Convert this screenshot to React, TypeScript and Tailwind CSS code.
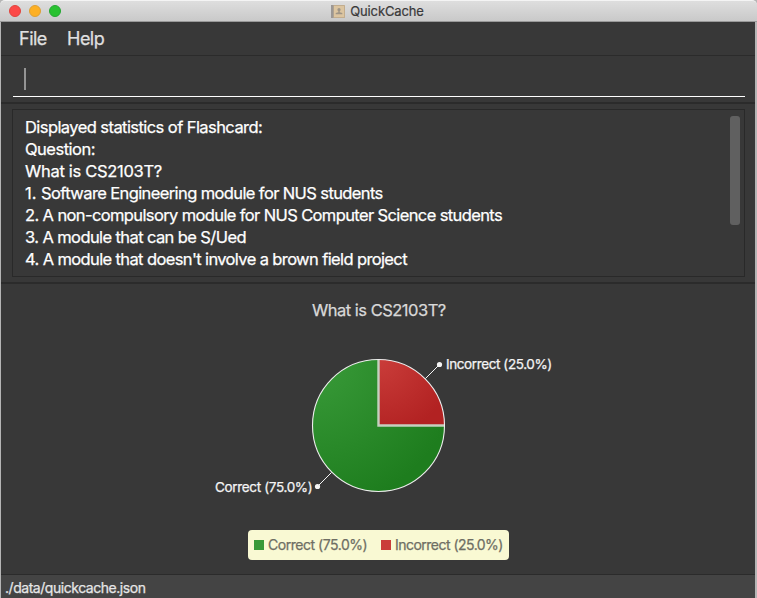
const lines = [
  { text: 'Displayed statistics of Flashcard:', track: 'tracking-[-0.57px]' },
  { text: 'Question:', track: 'tracking-[-0.5px]' },
  { text: 'What is CS2103T?', track: 'tracking-[-0.3px]' },
  { text: '1. Software Engineering module for NUS students', track: 'tracking-[-0.61px]', lead: true },
  { text: '2. A non-compulsory module for NUS Computer Science students', track: 'tracking-[-0.62px]' },
  { text: '3. A module that can be S/Ued', track: 'tracking-[-0.6px]' },
  { text: "4. A module that doesn't involve a brown field project", track: 'tracking-[-0.62px]' },
];

function TitleBar() {
  return (
    <header className="relative flex h-[22px] shrink-0 items-center justify-center rounded-t-[5px] border-t border-b border-t-[#f4f4f4] border-b-[#999999] bg-linear-to-b from-[#dedede] to-[#c9c9c9]">
      <div className="absolute top-1 left-[9px] flex gap-2">
        <span className="size-3 rounded-full border border-[#e0443e] bg-[#fc4948]" />
        <span className="size-3 rounded-full border border-[#dea034] bg-[#fdb024]" />
        <span className="size-3 rounded-full border border-[#24a732] bg-[#29c231]" />
      </div>
      <svg className="mr-[5px] ml-[-2px] h-[13px] w-[14px]" viewBox="0 0 14 13">
        <rect x="0" y="0" width="14" height="13" rx="0.500" fill="#c2ad8e" />
        <rect x="0" y="0" width="2.500" height="13" fill="#9b9794" />
        <rect x="3" y="1" width="10" height="11" fill="#dcc5a0" />
        <circle cx="8" cy="4.700" r="1.600" fill="#9f9586" />
        <path d="M7.3 6h1.4v1.2l2.6.9v1.2H4.7V8.100l2.600-.9z" fill="#9f9586" />
      </svg>
      <h1 className="text-[13px] leading-5 tracking-[-0.12px] text-[#3a3a3a] [-webkit-text-stroke:0.2px]">QuickCache</h1>
    </header>
  );
}

function Chart() {
  return (
    <svg className="block h-[290px] w-[754px] [&_text]:[stroke-width:0.25px]" viewBox="1 284 754 290">
      <defs>
        <radialGradient id="green" gradientUnits="userSpaceOnUse" cx="312" cy="359" r="150">
          <stop offset="0" stopColor="#399a39" />
          <stop offset="0.25" stopColor="#339433" />
          <stop offset="1" stopColor="#1e7d1e" />
        </radialGradient>
        <radialGradient id="red" gradientUnits="userSpaceOnUse" cx="379" cy="359" r="76">
          <stop offset="0" stopColor="#ca3d3a" />
          <stop offset="1" stopColor="#b22222" />
        </radialGradient>
      </defs>
      <text x="312" y="316" fontSize="16.500" letterSpacing="-0.5" fill="#d9d9d9" stroke="#d9d9d9">What is CS2103T?</text>
      <path d="M378.500 425.500H444.500A66 66 0 1 1 378.500 359.500Z" fill="url(#green)" />
      <path d="M378.500 425.500V359.500A66 66 0 0 1 444.500 425.500Z" fill="url(#red)" />
      <path d="M378.500 359.500V425.500H444.500" fill="none" stroke="#c5d0c0" strokeWidth="2.400" />
      <circle cx="378.500" cy="425.500" r="66" fill="none" stroke="#eeeeee" strokeWidth="1.100" />
      <path d="M425.500 378.500L439.500 364.500M331.500 472.500L317.500 486.500" stroke="#f4f4f4" />
      <circle cx="439.500" cy="364.500" r="2.600" fill="#f4f4f4" />
      <circle cx="317.500" cy="486.500" r="2.600" fill="#f4f4f4" />
      <text x="446" y="369" fontSize="13.500" letterSpacing="-0.4" fill="#f4f4f4" stroke="#f4f4f4">Incorrect (25.0%)</text>
      <text x="215" y="492" fontSize="13.500" letterSpacing="-0.34" fill="#f4f4f4" stroke="#f4f4f4">Correct (75.0%)</text>
      <rect x="248" y="530" width="261" height="30" rx="4" fill="#f9f9d3" />
      <rect x="254" y="540" width="10" height="10" fill="#399a39" />
      <rect x="381" y="540" width="10" height="10" fill="#ca3d3a" />
      <text x="268" y="550" fontSize="14" letterSpacing="-0.47" fill="#6e6e63" stroke="#6e6e63">Correct (75.0%)</text>
      <text x="395" y="550" fontSize="14" letterSpacing="-0.52" fill="#6e6e63" stroke="#6e6e63">Incorrect (25.0%)</text>
    </svg>
  );
}

export default function App() {
  return (
    <div className="h-[598px] w-[757px] overflow-hidden bg-[#b5b5b5] font-[Inter,sans-serif]">
      <TitleBar />
      <main className="mr-[2px] ml-px flex h-[576px] flex-col bg-[#383838] whitespace-pre [-webkit-text-stroke:0.25px]">
        <nav className="flex h-[34px] shrink-0 border-b border-[#2b2b2b] pl-[18px] text-[18px] leading-[33px] text-[#e0e0e0]">
          <span className="w-12 tracking-[-0.5px]">File</span>
          <span className="tracking-[-0.5px]">Help</span>
        </nav>
        <section className="h-12 shrink-0 border-b-2 border-[#2b2b2b] pr-[10px] pl-3">
          <div className="h-[41px] border-b border-white pt-3 pl-[11px]">
            <div className="h-[22px] w-[2px] bg-[#949494]" />
          </div>
        </section>
        <section className="h-[180px] shrink-0 border-b-2 border-[#2b2b2b] pt-[5px] pr-[10px] pl-[11px]">
          <div className="flex h-[168px] justify-between border border-[#292929] pt-[6px] pr-1 pl-3">
            <div className="text-[16.500px] leading-[22px] text-white">
              {lines.map((l) => (
                <p key={l.text} className={l.track}>
                  {l.lead ? <span className="tracking-[0px]">{l.text.slice(0, 3)}</span> : l.text.slice(0, 3)}
                  {l.text.slice(3)}
                </p>
              ))}
            </div>
            <div className="h-[109px] w-[10px] rounded-[3px] bg-[#606060]" />
          </div>
        </section>
        <Chart />
        <footer className="h-6 shrink-0 border-t border-[#2b2b2b] bg-[#444444] pl-1 text-[14px] leading-[26px] text-[#e6e6e6]">
          <span className="tracking-[-0.46px]">./data/quickcache.json</span>
        </footer>
      </main>
    </div>
  );
}
